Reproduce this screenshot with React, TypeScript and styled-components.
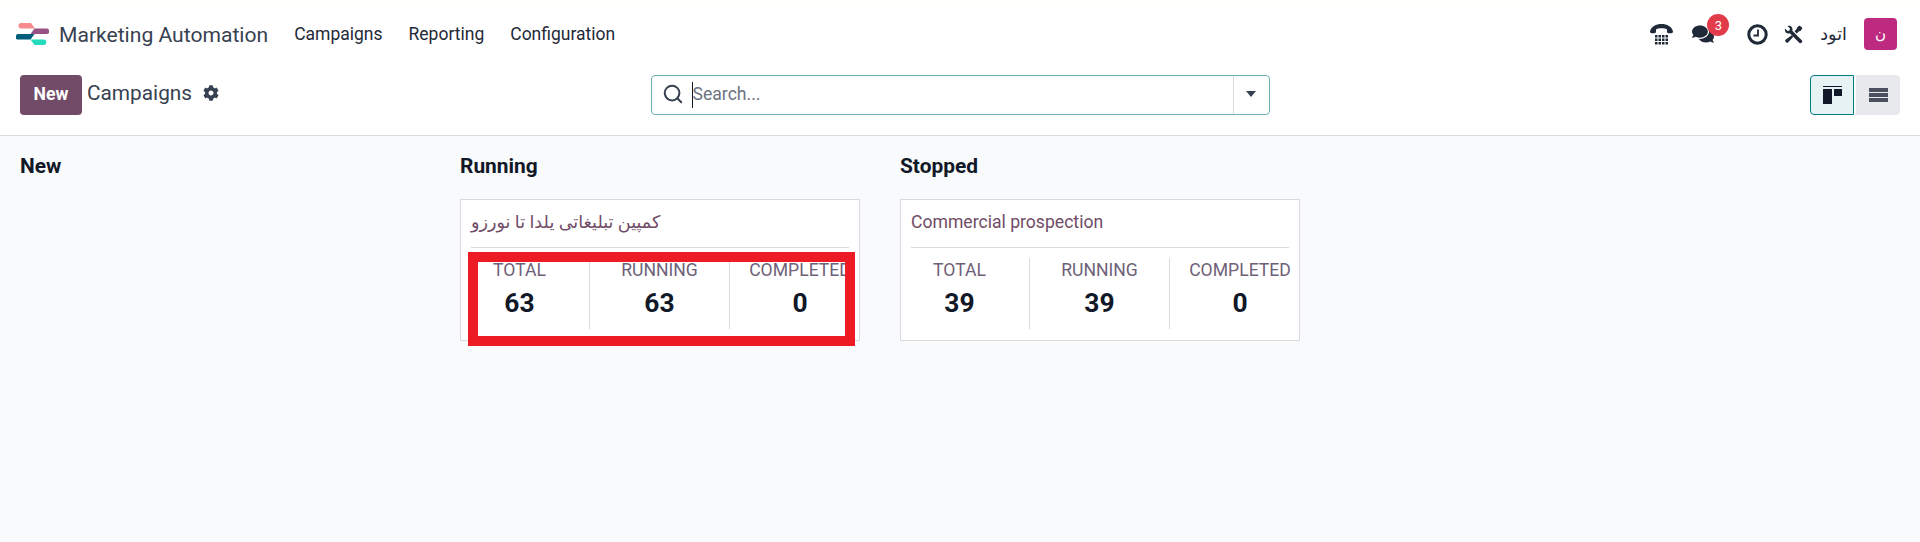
import { createGlobalStyle, styled } from "styled-components";
import { FaCog, FaComments } from "react-icons/fa";
import { Search } from "lucide-react";

const GlobalStyle = createGlobalStyle`
  html, body {
    margin: 0;
    padding: 0;
    background: #f9fafb;
    font-family: Roboto, "DejaVu Sans", sans-serif;
  }
`;

const TopBar = styled.header`
  box-sizing: border-box;
  height: 68px;
  padding: 0 23px 7px 16px;
  background: #fff;
  border-top: 7px solid #fffffb;
  display: flex;
  align-items: center;
`;

const BrandName = styled.span`
  margin-left: 10px;
  font-size: 21.1px;
  color: #374151;
`;

const MenuLink = styled.a`
  margin-left: 26px;
  font-size: 17.5px;
  color: #1f2937;
`;

const Systray = styled.div`
  margin-left: auto;
  display: flex;
  align-items: center;
  color: #1f2937;
`;

const TrayIcon = styled.span<{ $gap: number }>`
  position: relative;
  display: flex;
  margin-right: ${(p) => p.$gap}px;
`;

const Badge = styled.span`
  position: absolute;
  top: -9px;
  right: -15px;
  width: 22px;
  height: 22px;
  border-radius: 50%;
  background: #e23c4b;
  color: #fff;
  font-size: 13px;
  display: flex;
  align-items: center;
  justify-content: center;
`;

const UserName = styled.span`
  margin-right: 17px;
  font-size: 17.6px;
`;

const Avatar = styled.span`
  width: 33px;
  height: 32px;
  border-radius: 4px;
  background: #bd2a7f;
  color: #fff;
  font-size: 15px;
  display: flex;
  align-items: center;
  justify-content: center;
`;

const ControlPanel = styled.section`
  height: 68px;
  box-sizing: border-box;
  padding: 7px 20px 0;
  background: #fff;
  border-bottom: 1px solid #d8dadd;
  display: grid;
  grid-template-columns: 1fr 619px 1fr;
  align-items: start;
`;

const Left = styled.div`
  display: flex;
  align-items: center;
`;

const NewButton = styled.button`
  width: 62px;
  height: 40px;
  padding: 0 0 2px;
  border: 0;
  border-radius: 4px;
  background: #714b67;
  color: #fff;
  font: 700 17.6px Roboto, sans-serif;
`;

const PageTitle = styled.span`
  margin-left: 5px;
  margin-bottom: 4px;
  font-size: 20.8px;
  color: #374151;
`;

const Gear = styled(FaCog)`
  margin-left: 11px;
  margin-bottom: 4px;
  font-size: 16px;
  color: #374151;
`;

const SearchBox = styled.div`
  height: 40px;
  box-sizing: border-box;
  border: 1px solid #6fb0b4;
  border-radius: 4px;
  display: flex;
  align-items: center;
  background: #fff;
`;

const SearchField = styled.div`
  flex: 1;
  display: flex;
  align-items: center;
  padding: 0 0 2px 10px;
  font-size: 17.6px;
  color: #6b7280;
`;

const SearchIcon = styled(Search)`
  color: #374151;
`;

const Caret = styled.span`
  width: 1px;
  height: 26px;
  margin: 2px 0 0 8px;
  background: #111827;
`;

const DropToggle = styled.div`
  width: 35px;
  height: 100%;
  border-left: 1px solid #d8dadd;
  display: flex;
  align-items: center;
  justify-content: center;
  &::after {
    content: "";
    margin-bottom: 2px;
    border-style: solid;
    border-width: 6px 5px 0;
    border-color: #374151 transparent transparent;
  }
`;

const ViewSwitch = styled.div`
  display: flex;
  justify-content: flex-end;
  gap: 2px;
`;

const ViewButton = styled.div<{ $active?: boolean }>`
  width: 44px;
  height: 40px;
  box-sizing: border-box;
  display: flex;
  align-items: center;
  justify-content: center;
  border: 1px solid ${(p) => (p.$active ? "#017e84" : "#e7e9ed")};
  border-radius: ${(p) => (p.$active ? "4px 0 0 4px" : "0 4px 4px 0")};
  background: ${(p) => (p.$active ? "#e6f2f3" : "#e7e9ed")};
`;

const Board = styled.main`
  box-sizing: border-box;
  min-height: 406px;
  padding: 18px 0 0 20px;
  display: flex;
  gap: 40px;
`;

const Column = styled.section`
  width: 400px;
`;

const ColumnTitle = styled.h2`
  margin: 0 0 20px;
  font-size: 20.9px;
  line-height: 25px;
  font-weight: 700;
  color: #111827;
`;

const Card = styled.article`
  position: relative;
  box-sizing: border-box;
  height: 142px;
  padding: 10px;
  background: #fff;
  border: 1px solid #d8dadd;
`;

const CardTitle = styled.div`
  height: 38px;
  padding-top: 2px;
  box-sizing: border-box;
  font-size: 17.6px;
  line-height: 20px;
  color: #714b67;
  border-bottom: 1px solid #d8dadd;
`;

const Stats = styled.div`
  margin: 10px -21px 0;
  display: grid;
  grid-template-columns: repeat(3, 1fr);
`;

const Stat = styled.div`
  height: 71px;
  text-align: center;
  &:not(:last-child) {
    border-right: 1px solid #d8dadd;
  }
`;

const StatLabel = styled.div`
  font-size: 17.6px;
  line-height: 24px;
  white-space: nowrap;
  color: #6f5f78;
`;

const StatValue = styled.div`
  margin-top: 6px;
  font-size: 26.4px;
  line-height: 30px;
  font-weight: 700;
  color: #111827;
`;

const Highlight = styled.div`
  position: absolute;
  left: 7px;
  top: 52px;
  width: 387px;
  height: 94px;
  box-sizing: border-box;
  border: 10px solid #ed1c24;
`;

const Logo = () => (
  <svg width="33" height="22" viewBox="0 0 33 22">
    <path d="M5 0H15L19 5.500H5.500a2.700 2.700 0 0 1-.5-5.500z" fill="#f78a8e" />
    <path d="M18.500 5.500H30.500a2.700 2.700 0 0 1 0 5.500H14.500z" fill="#985184" />
    <path d="M2 11H18.500L14.500 16.500H2a1.500 1.500 0 0 1-2-1.500V13a2 2 0 0 1 2-2z" fill="#005e7a" />
    <path d="M14.500 16.500H27.500a2.700 2.700 0 0 1 0 5.500H18.500z" fill="#21dbbc" />
  </svg>
);

const PhoneIcon = () => (
  <svg width="23" height="21" viewBox="0 0 23 21" fill="currentColor">
    <path d="M0 7.500C1 2.500 6 0 11.500 0S22 2.500 23 7.500c0 1.200-.7 1.700-1.500 1.700h-3c-1 0-1.500-.7-1.500-1.600V5.400C15.500 4.600 13.500 4.300 11.500 4.300S7.500 4.600 6 5.400V7.600C6 8.500 5.500 9.200 4.500 9.200h-3C.7 9.200 0 8.700 0 7.500z" />
    {[11, 14.5, 18].map((y) =>
      [5, 8.5, 12, 15.5].map((x) => <rect key={`${x}-${y}`} x={x} y={y} width="2.5" height="2.5" />),
    )}
  </svg>
);

const ClockIcon = () => (
  <svg width="21" height="21" viewBox="0 0 21 21" fill="none" stroke="currentColor">
    <circle cx="10.5" cy="10.5" r="8.7" strokeWidth="3" />
    <path d="M11 5.500V11.500H6.500" strokeWidth="1.8" />
  </svg>
);

const ToolsIcon = () => (
  <svg width="19" height="19" viewBox="0 0 19 19" fill="currentColor">
    <path d="M1 3.500L3.500 6l2-.5.5-2L3.500 1C6 0 8.500 1.500 8.500 4.500c0 .5 0 1-.2 1.300L18 15.500c1.200 1.300-1.200 3.700-2.500 2.500L5.800 8.300C3 9.500 .2 7 1 3.500z" />
    <path d="M15.500 .5L18.500 3l-2 3-1.500 .3L12.800 8.500 10.500 6.200l2.200-2.200L13 2.500zM7.800 10.200l1.500 1.500L4 17.500c-1 1.200-3.700-1.200-2.500-2.800z" />
  </svg>
);

const KanbanIcon = () => (
  <svg width="19" height="18" viewBox="0 0 19 18">
    <rect y="0" width="19" height="1" fill="#111827" />
    <rect y="3" width="9" height="15" fill="#111827" />
    <rect x="11" y="3" width="8" height="7" fill="#111827" />
  </svg>
);

const ListIcon = () => (
  <svg width="19" height="14" viewBox="0 0 19 14">
    <rect width="19" height="4" fill="#4b5060" />
    <rect y="5" width="19" height="4" fill="#4b5060" />
    <rect y="10" width="19" height="4" fill="#4b5060" />
  </svg>
);

const campaigns = [
  { title: "کمپین تبلیغاتی یلدا تا نورزو", count: 63, marked: true },
  { title: "Commercial prospection", count: 39, marked: false },
];

const CampaignCard = ({ title, count, marked }: (typeof campaigns)[number]) => (
  <Card>
    <CardTitle>{title}</CardTitle>
    <Stats>
      <Stat>
        <StatLabel>TOTAL</StatLabel>
        <StatValue>{count}</StatValue>
      </Stat>
      <Stat>
        <StatLabel>RUNNING</StatLabel>
        <StatValue>{count}</StatValue>
      </Stat>
      <Stat>
        <StatLabel>COMPLETED</StatLabel>
        <StatValue>0</StatValue>
      </Stat>
    </Stats>
    {marked && <Highlight />}
  </Card>
);

export default function App() {
  return (
    <>
      <GlobalStyle />
      <TopBar>
        <Logo />
        <BrandName>Marketing Automation</BrandName>
        <MenuLink>Campaigns</MenuLink>
        <MenuLink>Reporting</MenuLink>
        <MenuLink>Configuration</MenuLink>
        <Systray>
          <TrayIcon $gap={19}>
            <PhoneIcon />
          </TrayIcon>
          <TrayIcon $gap={33}>
            <FaComments size={22} />
            <Badge>3</Badge>
          </TrayIcon>
          <TrayIcon $gap={16}>
            <ClockIcon />
          </TrayIcon>
          <TrayIcon $gap={17}>
            <ToolsIcon />
          </TrayIcon>
          <UserName>اتود</UserName>
          <Avatar>ن</Avatar>
        </Systray>
      </TopBar>
      <ControlPanel>
        <Left>
          <NewButton>New</NewButton>
          <PageTitle>Campaigns</PageTitle>
          <Gear />
        </Left>
        <SearchBox>
          <SearchField>
            <SearchIcon size={22} strokeWidth={2.2} />
            <Caret />
            Search...
          </SearchField>
          <DropToggle />
        </SearchBox>
        <ViewSwitch>
          <ViewButton $active>
            <KanbanIcon />
          </ViewButton>
          <ViewButton>
            <ListIcon />
          </ViewButton>
        </ViewSwitch>
      </ControlPanel>
      <Board>
        <Column>
          <ColumnTitle>New</ColumnTitle>
        </Column>
        <Column>
          <ColumnTitle>Running</ColumnTitle>
          <CampaignCard {...campaigns[0]} />
        </Column>
        <Column>
          <ColumnTitle>Stopped</ColumnTitle>
          <CampaignCard {...campaigns[1]} />
        </Column>
      </Board>
    </>
  );
}
